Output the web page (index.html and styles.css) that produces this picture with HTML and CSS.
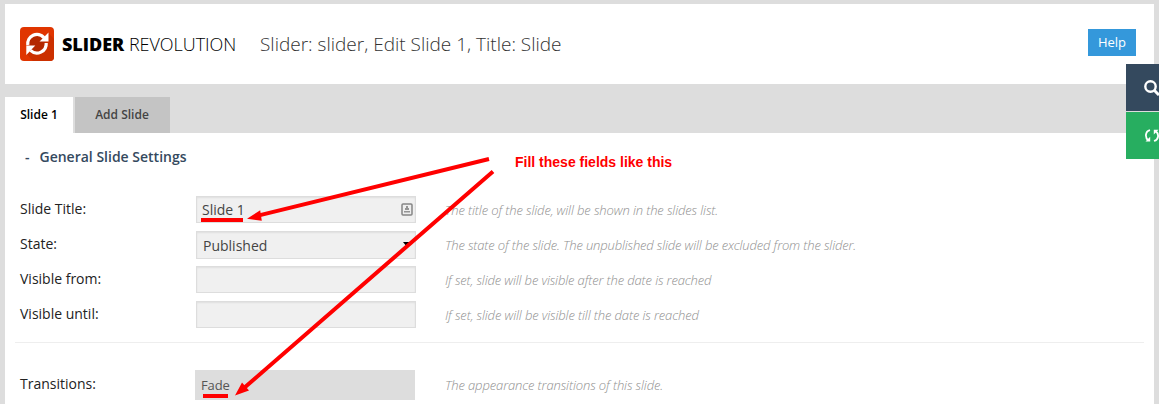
FILE: index.html
```html
<!DOCTYPE html>
<html lang="en">
<head>
<meta charset="utf-8">
<title>Slider Revolution - Edit Slide</title>
<link rel="stylesheet" href="styles.css">
</head>
<body>
<div class="page">
  <header class="header">
    <svg class="logo" viewBox="0 0 34 34">
      <rect width="34" height="34" rx="4" fill="#e03500"/>
      <path d="M28.500 6L34 12V30Q34 34 30 34H13L7 27.500Z" fill="#cb3000"/>
      <circle cx="17" cy="17" r="8" fill="#b32800"/>
      <g fill="none" stroke="#fff" stroke-width="3.200">
        <path d="M7.800 18A9.300 9.300 0 0 1 24 10.600"/>
        <path d="M26.200 16A9.300 9.300 0 0 1 10.500 23.400"/>
      </g>
      <path d="M28.500 5.500V14.500H19.500ZM6.300 28V18.500H15.300Z" fill="#fff"/>
    </svg>
    <div class="brand"><b>SLIDER</b> <span>REVOLUTION</span></div>
    <h1 class="title">Slider: slider, Edit Slide 1, Title: Slide</h1>
    <button class="help">Help</button>
  </header>
  <nav class="tabs">
    <div class="tab tab-active">Slide 1</div>
    <div class="tab tab-add">Add Slide</div>
  </nav>
  <main class="panel">
    <h2 class="section"><span class="minus">-</span><span class="section-name">General Slide Settings</span></h2>
    <div class="row">
      <label class="label">Slide Title:</label>
      <div class="field">Slide 1
        <svg class="card" viewBox="0 0 12 13"><rect x="1" y="1" width="10" height="11" rx="1" fill="#eee" stroke="#858585" stroke-width="1.500"/><path d="M5 3H7V5H8V7H4V5H5ZM3 8H9V9.500H3Z" fill="#949494"/></svg>
      </div>
      <p class="hint hint-title">The title of the slide, will be shown in the slides list.</p>
    </div>
    <div class="row">
      <label class="label">State:</label>
      <div class="field select">Published<svg class="caret" viewBox="0 0 8 5"><path d="M0 0H8L4 5Z"/></svg></div>
      <p class="hint hint-state">The state of the slide. The unpublished slide will be excluded from the slider.</p>
    </div>
    <div class="row">
      <label class="label">Visible from:</label>
      <div class="field"></div>
      <p class="hint hint-from">If set, slide will be visible after the date is reached</p>
    </div>
    <div class="row">
      <label class="label">Visible until:</label>
      <div class="field"></div>
      <p class="hint hint-until">If set, slide will be visible till the date is reached</p>
    </div>
    <hr class="divider">
    <div class="row row-transition">
      <label class="label">Transitions:</label>
      <div class="transition">Fade</div>
      <p class="hint hint-trans">The appearance transitions of this slide.</p>
    </div>
  </main>
</div>
<aside class="tools">
  <div class="tool search"><svg viewBox="0 0 16 16"><circle cx="6.500" cy="6.500" r="5.200" fill="none" stroke="#fff" stroke-width="2.400"/><path d="M10 10L15 15" stroke="#fff" stroke-width="3"/></svg></div>
  <div class="tool refresh"><svg viewBox="0 0 16 16"><path d="M6 2.200C1 3.500 .800 9.500 4.300 12.500M10 13C15 11.500 15.200 6 11.700 3" fill="none" stroke="#fff" stroke-width="1.800"/><path d="M1.500 13.500H6.200V8.800ZM14.500 1.700H9.800V6.400Z" fill="#fff"/></svg></div>
</aside>
<svg class="marks" viewBox="0 0 1159 404">
  <g stroke="#f00" stroke-width="4">
    <path d="M489 159L258 215.600M493 171.500L244 388"/>
    <path d="M201 220H243M203 396H228"/>
  </g>
  <path d="M247 218.800L260.200 210.200L261.800 220.800ZM235 395.600L242 382.500L249 390.500Z" fill="#f00"/>
</svg>
<div class="note">Fill these fields like this</div>
</body>
</html>
```

FILE: styles.css
```css
* { box-sizing: border-box; }
body {
  margin: 0;
  width: 1159px;
  height: 404px;
  overflow: hidden;
  position: relative;
  background: #ddd;
  font-family: "Open Sans", "Noto Sans", sans-serif;
}
.page { padding: 4px 5px 0; height: 404px; display: flex; flex-direction: column; }
.header {
  height: 80px;
  flex: none;
  background: #fff;
  display: flex;
  align-items: center;
  padding: 0 18px 0 15px;
}
.logo { width: 34px; height: 34px; flex: none; }
.brand { width: 198px; margin: -1px 0 0 8px; font-size: 18px; line-height: 24px; color: #000; white-space: nowrap; letter-spacing: -.03px; }
.brand b { font-weight: 800; }
.brand span { font-weight: 300; }
.title { margin: 0; font-size: 19px; line-height: 24px; font-weight: 300; color: #333; white-space: nowrap; }
.help {
  width: 48px;
  height: 27px;
  margin: -3px 0 0 auto;
  padding: 0;
  border: 0;
  background: #3498db;
  color: #fff;
  font: 13px/27px "Open Sans", sans-serif;
}
.tabs { display: flex; gap: 2px; margin-top: 13px; height: 36px; flex: none; }
.tab { font-size: 12px; line-height: 35px; font-weight: 600; text-align: center; white-space: nowrap; }
.tab-active { width: 68px; background: #fff; color: #000; }
.tab-add { width: 95px; padding-right: 1px; background: #c4c4c4; color: #444; }
.panel { flex: 1; background: #fff; min-height: 0; overflow: hidden; }
.section { display: flex; margin: 14px 0 29px 20px; font-size: 14px; line-height: 20px; font-weight: 600; color: #34495e; }
.minus { width: 14.5px; }
.row { display: flex; height: 35px; padding-left: 15px; }
.label { width: 176px; font-size: 14px; line-height: 25px; color: #222; }
.row-transition .label { line-height: 27px; }
.field {
  width: 220px;
  height: 27px;
  border: 1px solid #ddd;
  background: #f0f0f0;
  box-shadow: inset 0 1px 2px rgba(0,0,0,.07);
  padding: 0 2px 0 5px;
  font-size: 14px;
  line-height: 26px;
  color: #444;
  display: flex;
  justify-content: space-between;
  align-items: center;
}
.select { height: 28px; padding: 1px 2px 0 6px; line-height: 28px; }
.card { width: 12px; height: 13px; }
.caret { width: 8px; height: 5px; margin: 0 2px 2px 0; }
.hint { margin: 0 0 0 29px; font-size: 13px; line-height: 29px; font-style: italic; font-weight: 300; color: #909090; white-space: nowrap; }
.hint-title { letter-spacing: -.12px; }
.hint-state { letter-spacing: -.15px; }
.hint-from { letter-spacing: -.135px; }
.hint-until { letter-spacing: -.12px; }
.hint-trans { letter-spacing: -.12px; line-height: 31px; }
.divider { margin: 6px 10px 27px; border: 0; height: 1px; background: #eee; }
.transition { width: 220px; height: 30px; margin-left: -1px; margin-right: 1px; padding-left: 6px; background: #ddd; color: #555; font-size: 13px; line-height: 31px; letter-spacing: -.1px; }
.tools { position: absolute; left: 1126px; top: 64px; width: 33px; display: grid; gap: 1px; overflow: hidden; background: #ddd; }
.tool { height: 47px; display: flex; align-items: center; padding-left: 18px; }
.tool svg { width: 16px; height: 16px; flex: none; }
.search { background: #34495e; }
.refresh { background: #27ae60; }
.marks { position: absolute; left: 0; top: 0; width: 1159px; height: 404px; }
.note { position: absolute; left: 515px; top: 152px; font: bold 14px/20px "Liberation Sans", Arial, sans-serif; color: #f00; white-space: nowrap; }
```
